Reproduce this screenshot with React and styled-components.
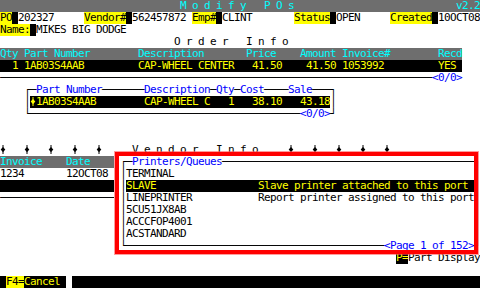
import React from 'react'
import styled, { createGlobalStyle } from 'styled-components'

const GlobalStyle = createGlobalStyle`
  html, body { margin: 0; padding: 0; background: #fff; }
`

const CELL = 6
const place = (width, items) => {
  const out = Array(width).fill(' ')
  items.forEach(([col, str]) => {
    for (let i = 0; i < str.length; i++) out[col + i] = str[i]
  })
  return out.join('')
}
const sp = (n) => ' '.repeat(n)
const line = (n) => '─'.repeat(n)

const Screen = styled.div`
  position: relative;
  width: 480px;
  height: 288px;
  overflow: hidden;
  background: #fff;
  color: #000;
  font-family: "DejaVu Sans Mono", "Liberation Mono", monospace;
  font-size: 11px;
  letter-spacing: -0.6226px;
  line-height: 12px;
`

const Row = styled.div`
  height: 12px;
  white-space: pre;
  overflow: hidden;
  background: ${({ $bg }) => $bg || 'transparent'};
  color: ${({ $fg }) => $fg || '#000'};
`

const Label = styled.span`
  background: #ffff00;
  color: #000;
`

const Mark = styled.span`
  background: #000;
  color: ${({ $fg }) => $fg || '#ffff00'};
`

const HeadBand = styled.span`
  display: inline-block;
  vertical-align: top;
  background: #6e6e6e;
  color: #00ffff;
`

const DataBand = styled.span`
  display: inline-block;
  vertical-align: top;
  height: 12px;
  background: #000;
  color: #ffff00;
`

const Title = styled.span`
  color: #0000ff;
`

const Glyph = styled.svg`
  display: inline-block;
  vertical-align: top;
  width: ${CELL}px;
  height: 12px;
`

const Pointer = ({ color = '#000' }) => (
  <Glyph viewBox="0 0 6 12">
    <line x1="3" y1="1" x2="3" y2="10" stroke={color} strokeWidth="1" />
    <polygon points="3,3 5.3,5.6 3,8.2 0.7,5.6" fill={color} />
  </Glyph>
)

const Popup = styled.div`
  position: absolute;
  left: 114px;
  top: 156px;
  width: 366px;
  background: #fff;
`

const Callout = styled.div`
  position: absolute;
  left: 115px;
  top: 152px;
  width: 363px;
  height: 102px;
  box-sizing: border-box;
  border: 4px solid #ff0000;
  box-shadow: 0 0 0 1px rgba(255, 90, 90, 0.6);
  pointer-events: none;
`

const pointerRow = (cols) =>
  cols.map((c) => (
    <React.Fragment key={c}>
      <Pointer />
      {sp(3)}
    </React.Fragment>
  ))

const printers = [
  ['TERMINAL', ''],
  ['SLAVE', 'Slave printer attached to this port'],
  ['LINEPRINTER', 'Report printer assigned to this port'],
  ['5CU51JX8AB', ''],
  ['ACCCFOP4001', ''],
  ['ACSTANDARD', ''],
]

export default function App() {
  return (
    <>
      <GlobalStyle />
      <Screen>
        <Row $bg="#6e6e6e" $fg="#00ffff">
          {place(80, [[30, 'M o d i f y   P O s'], [76, 'v2.2']])}
        </Row>
        <Row>
          <Label>PO</Label><Mark> </Mark>{'202327     '}
          <Label>Vendor#</Label><Mark> </Mark>{'562457872 '}
          <Label>Emp#</Label><Mark> </Mark>{'CLINT       '}
          <Label>Status</Label><Mark> </Mark>{'OPEN     '}
          <Label>Created</Label><Mark> </Mark>{'10OCT08'}
        </Row>
        <Row>
          <Label>Name:</Label><Mark> </Mark>{'MIKES BIG DODGE'}
        </Row>
        <Row>{place(80, [[29, 'O r d e r   I n f o']])}</Row>
        <Row>
          <HeadBand>
            {place(77, [[0, 'Qty Part Number'], [23, 'Description'], [41, 'Price'], [50, 'Amount'], [57, 'Invoice#'], [73, 'Recd']])}
          </HeadBand>
        </Row>
        <Row>
          <DataBand>
            {place(77, [[2, '1'], [4, '1AB03S4AAB'], [23, 'CAP-WHEEL CENTER'], [42, '41.50'], [51, '41.50'], [57, '1053992'], [73, 'YES']])}
          </DataBand>
        </Row>
        <Row>
          {line(72)}<Title>{'<0/0>'}</Title>
        </Row>
        <Row>
          {sp(4) + '┌─'}<Title>Part Number</Title>{line(7)}<Title>Description</Title>{'─'}
          <Title>Qty</Title>{'─'}<Title>Cost</Title>{line(4)}<Title>Sale</Title>{line(3) + '┐'}
        </Row>
        <Row>
          {sp(4) + '│'}
          <DataBand>
            <Pointer color="#ffff00" />
            {place(49, [[0, '1AB03S4AAB'], [18, 'CAP-WHEEL C'], [32, '1'], [36, '38.10'], [44, '43.18']])}
          </DataBand>
          {'│'}
        </Row>
        <Row>
          {sp(4) + '└' + line(45)}<Title>{'<0/0>'}</Title>{'┘'}
        </Row>
        <Row />
        <Row />
        <Row>
          {pointerRow([0, 4, 8, 12, 16])}
          {sp(2) + 'V e n d o r   I n f o' + sp(5)}
          {pointerRow([48, 52, 56, 60, 64])}
        </Row>
        <Row>
          <HeadBand>{place(77, [[0, 'Invoice'], [11, 'Date'], [19, 'Type']])}</HeadBand>
        </Row>
        <Row>{place(80, [[0, '1234'], [11, '12OCT08']])}</Row>
        <Row>
          <DataBand>{sp(77)}</DataBand>
        </Row>
        <Row>{line(77)}</Row>
        <Row />
        <Row />
        <Row />
        <Row />
        <Row>
          {sp(66)}<Mark>P=</Mark>{'Part Display'}
        </Row>
        <Row />
        <Row>
          <Mark> </Mark><Label>F4=</Label><Mark>{'Cancel '}</Mark>{' '}<Mark>{sp(68)}</Mark>
        </Row>

        <Popup>
          <Row>
            {' ┌─'}<Title>Printers/Queues</Title>{line(42) + '┐'}
          </Row>
          {printers.map(([name, desc], i) =>
            i === 1 ? (
              <Row key={name}>
                {' │'}
                <DataBand>{place(58, [[0, name], [22, desc]])}</DataBand>
                {'│'}
              </Row>
            ) : (
              <Row key={name}>{' │' + place(58, [[0, name], [22, desc]]) + '│'}</Row>
            )
          )}
          <Row>
            {' └' + line(43)}<Title>{'<Page 1 of 152>'}</Title>{'┘'}
          </Row>
        </Popup>
        <Callout />
      </Screen>
    </>
  )
}
